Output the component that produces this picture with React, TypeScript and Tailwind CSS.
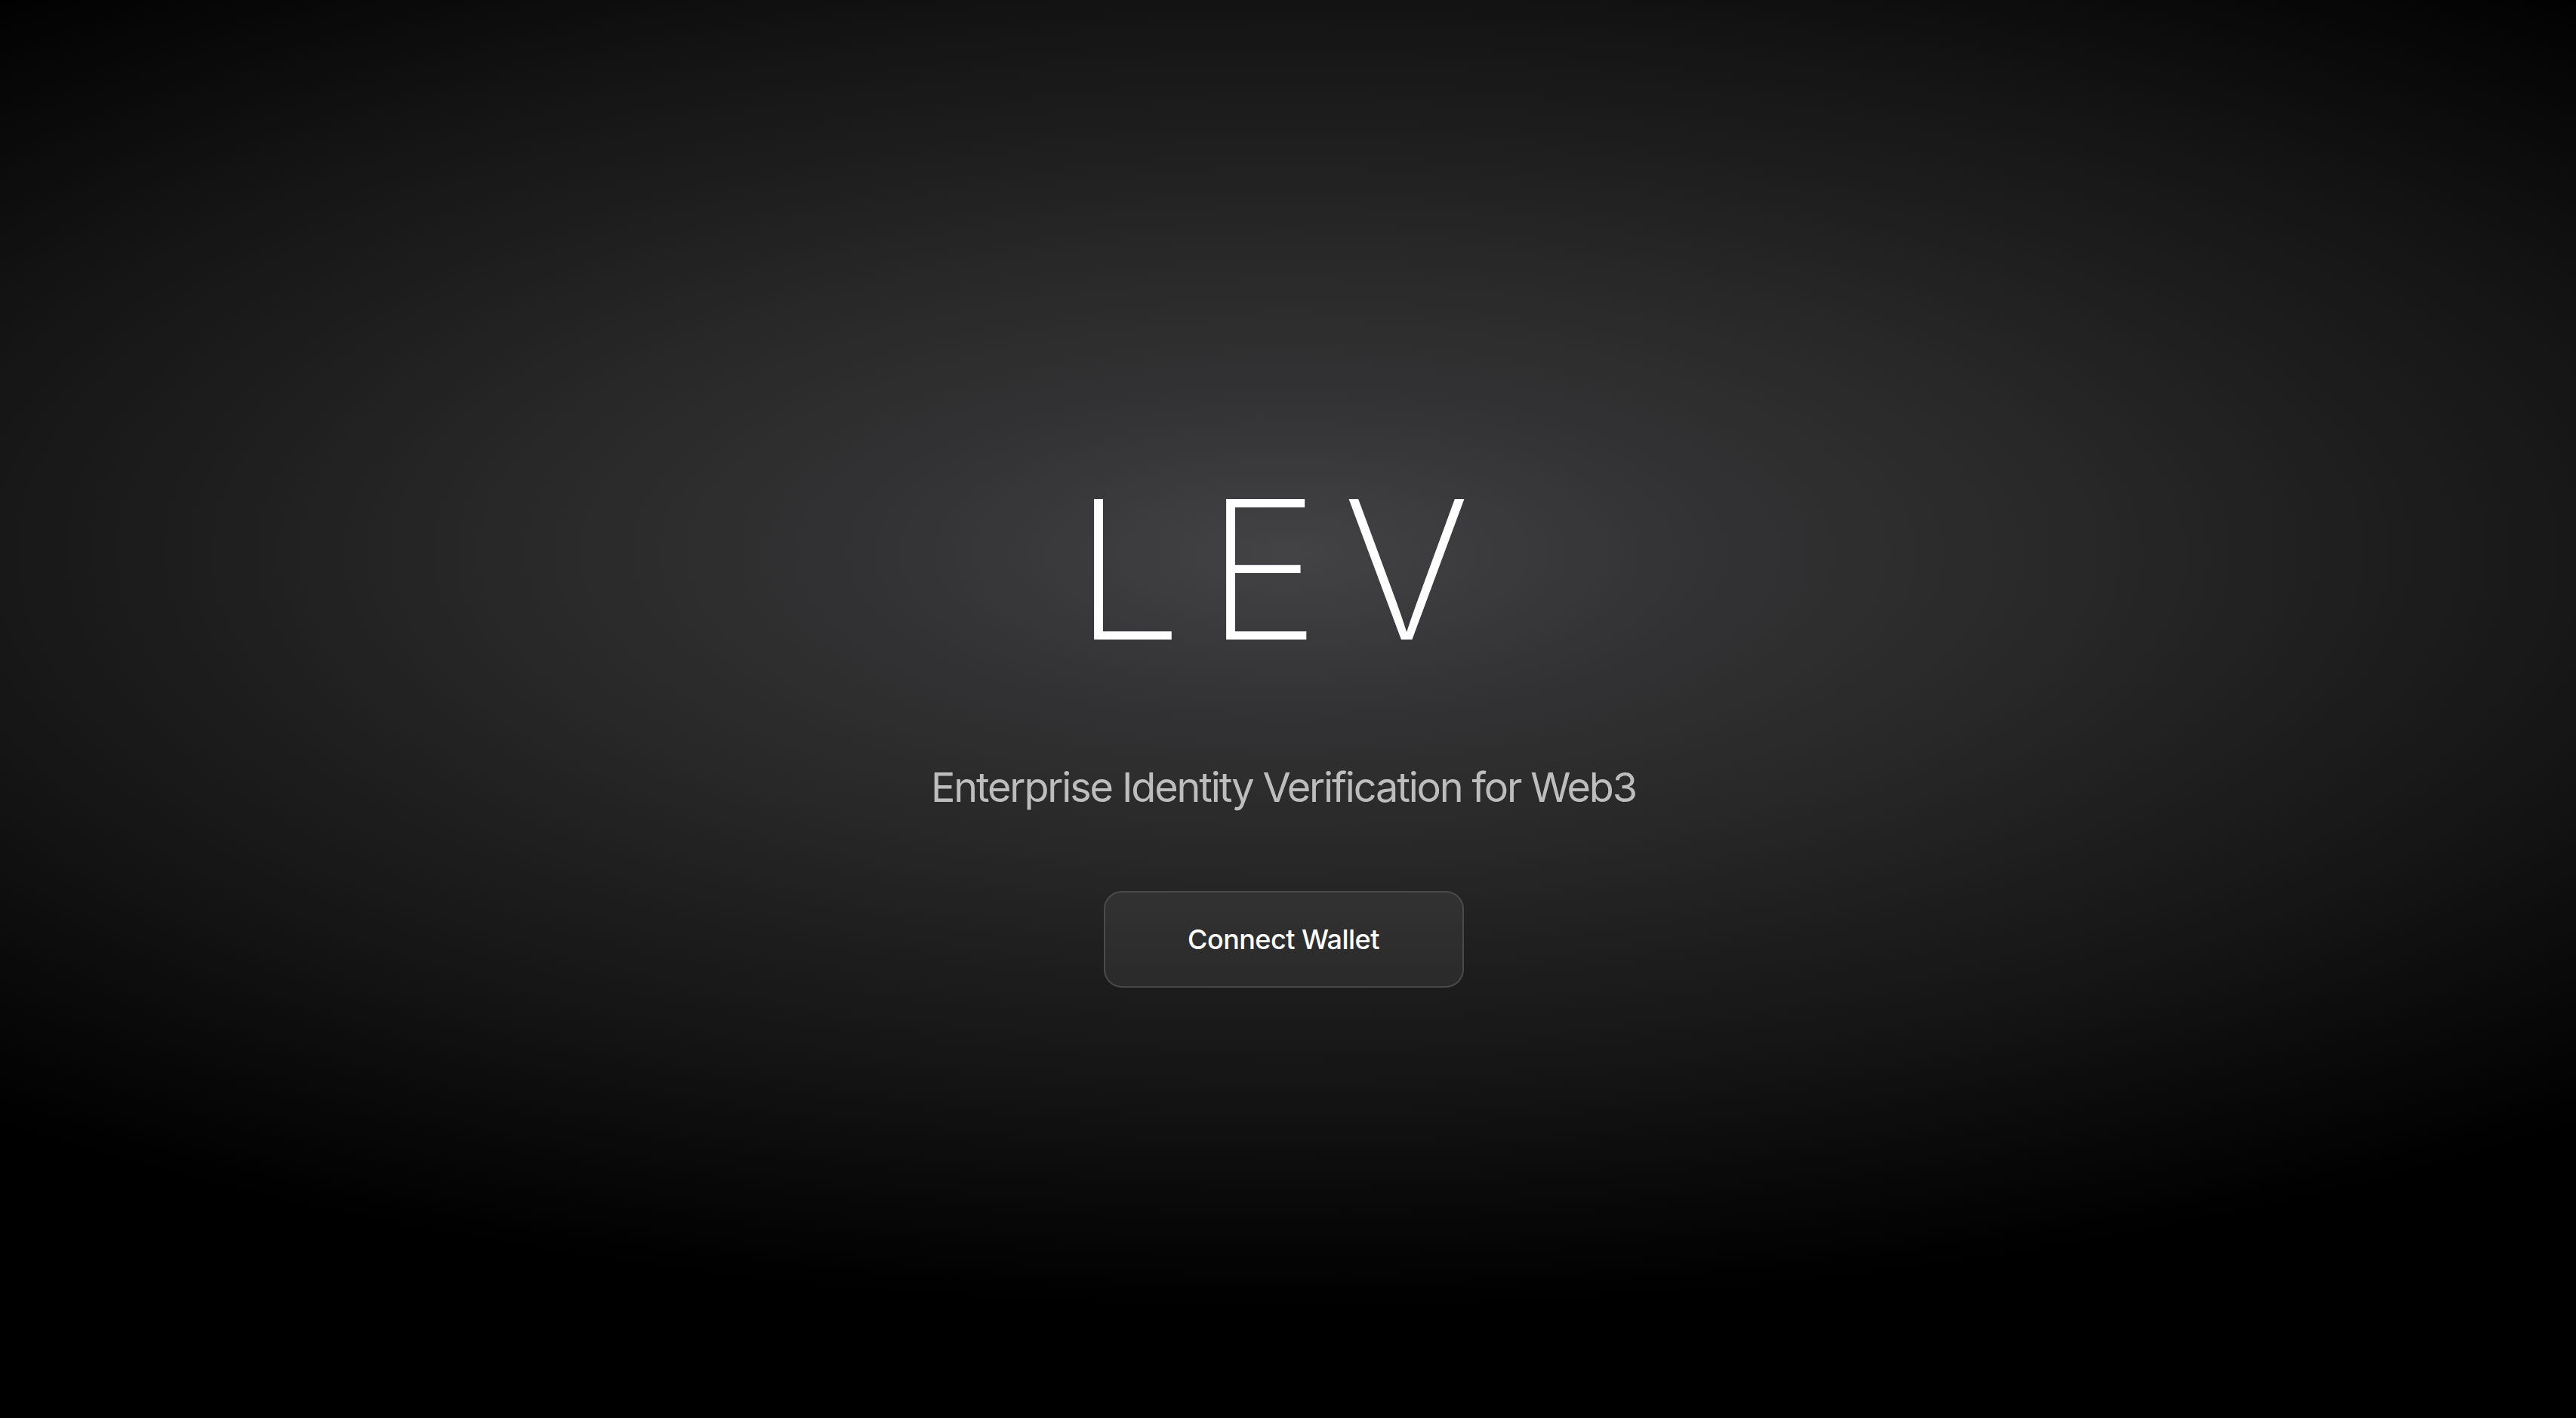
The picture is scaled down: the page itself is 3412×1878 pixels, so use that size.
export default function App() {
  return (
    <div className="flex min-h-screen w-full flex-col items-center justify-center bg-[radial-gradient(2600px_1000px_at_50%_39%,#434346_0%,#333335_20%,#282828_40%,#1e1e1e_55%,#151515_70%,#0a0a0a_85%,#000_100%)] pt-[56px] pr-[12px] font-['Inter',_'Liberation_Sans',_sans-serif]">
      <h1 className="text-[256px] leading-none font-extralight tracking-[0.12em] text-white">
        LEV
      </h1>
      <p className="mt-[129px] text-[54px] leading-[1.2] font-normal tracking-[-0.04em] text-[#bdbdbd]">
        Enterprise Identity Verification for Web3
      </p>
      <button className="mt-[104px] h-[128px] w-[477px] rounded-[24px] border-2 border-[#4a4a4a] bg-gradient-to-b from-[#323232] to-[#2a2a2a] text-[36px] font-medium tracking-[-0.015em] text-white">
        Connect Wallet
      </button>
    </div>
  );
}
